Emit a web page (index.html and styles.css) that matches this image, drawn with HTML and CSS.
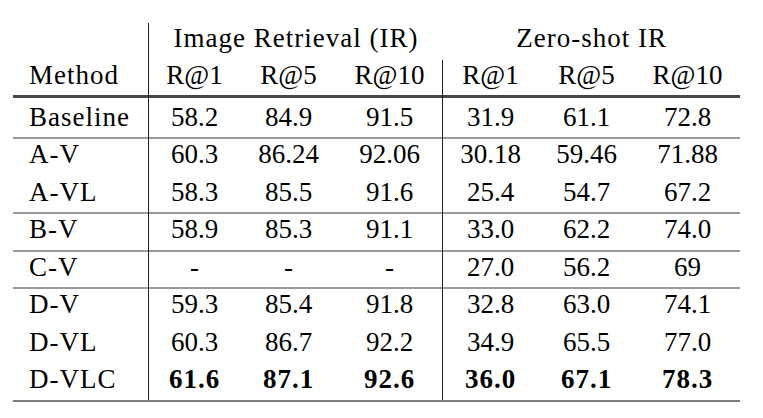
FILE: index.html
```html
<!DOCTYPE html>
<html lang="en">
<head>
<meta charset="utf-8">
<title>Retrieval results</title>
<link rel="stylesheet" href="styles.css">
</head>
<body>
<table class="results">
  <colgroup>
    <col class="w-method">
    <col class="w-a1">
    <col class="w-a5">
    <col class="w-a10">
    <col class="w-b1">
    <col class="w-b5">
    <col class="w-b10">
  </colgroup>
  <thead>
    <tr class="group">
      <th class="sep"></th>
      <th class="label" colspan="3">Image Retrieval (IR)</th>
      <th class="label" colspan="3">Zero-shot IR</th>
    </tr>
    <tr class="cols">
      <th class="label method sep">Method</th>
      <th>R@1</th>
      <th>R@5</th>
      <th class="sep">R@10</th>
      <th>R@1</th>
      <th>R@5</th>
      <th>R@10</th>
    </tr>
  </thead>
  <tbody>
    <tr class="first">
      <td class="label method sep">Baseline</td>
      <td>58.2</td><td>84.9</td><td class="sep">91.5</td>
      <td>31.9</td><td>61.1</td><td>72.8</td>
    </tr>
    <tr class="rule">
      <td class="label method sep">A-V</td>
      <td>60.3</td><td>86.24</td><td class="sep">92.06</td>
      <td>30.18</td><td>59.46</td><td>71.88</td>
    </tr>
    <tr>
      <td class="label method sep">A-VL</td>
      <td>58.3</td><td>85.5</td><td class="sep">91.6</td>
      <td>25.4</td><td>54.7</td><td>67.2</td>
    </tr>
    <tr class="rule">
      <td class="label method sep">B-V</td>
      <td>58.9</td><td>85.3</td><td class="sep">91.1</td>
      <td>33.0</td><td>62.2</td><td>74.0</td>
    </tr>
    <tr class="rule">
      <td class="label method sep">C-V</td>
      <td>-</td><td>-</td><td class="sep">-</td>
      <td>27.0</td><td>56.2</td><td>69</td>
    </tr>
    <tr class="rule">
      <td class="label method sep">D-V</td>
      <td>59.3</td><td>85.4</td><td class="sep">91.8</td>
      <td>32.8</td><td>63.0</td><td>74.1</td>
    </tr>
    <tr>
      <td class="label method sep">D-VL</td>
      <td>60.3</td><td>86.7</td><td class="sep">92.2</td>
      <td>34.9</td><td>65.5</td><td>77.0</td>
    </tr>
    <tr>
      <td class="label method sep">D-VLC</td>
      <td class="best">61.6</td><td class="best">87.1</td><td class="best sep">92.6</td>
      <td class="best">36.0</td><td class="best">67.1</td><td class="best">78.3</td>
    </tr>
  </tbody>
</table>
</body>
</html>
```

FILE: styles.css
```css
html, body {
  margin: 0;
  padding: 0;
  background: #ffffff;
}

body {
  padding: 23px 0 0 13px;
  font-family: "Liberation Serif", "LiberationSerif", "Tinos", "Noto Serif", "DejaVu Serif", "FreeSerif", "Nimbus Roman", "Nimbus Roman No9 L", "Times New Roman", Times, serif;
  font-size: 27px;
  color: #000000;
}

.results {
  width: 727px;
  table-layout: fixed;
  border-collapse: separate;
  border-spacing: 0;
  border-bottom: 2px solid #7a7a7a;
  font: inherit;
}

.w-method { width: 136px; }
.w-a1 { width: 91px; }
.w-a5 { width: 97px; }
.w-a10 { width: 106px; }
.w-b1 { width: 95px; }
.w-b5 { width: 97px; }
.w-b10 { width: 105px; }

.results th,
.results td {
  font-family: inherit;
  font-weight: normal;
  text-align: center;
  vertical-align: top;
  line-height: 30px;
  padding: 2px 0 0 0;
  white-space: nowrap;
}

.results .label {
  letter-spacing: 1px;
}

.results .method {
  text-align: left;
  padding-left: 16px;
}

.results .sep {
  border-right: 1px solid #1e1e1e;
}

.group {
  height: 37px;
}

.group th {
  padding-top: 0;
}

.cols {
  height: 38px;
}

.cols th {
  padding-top: 0;
  box-shadow: inset 0 -3px 0 #474747;
}

.results tbody tr {
  height: 37.5px;
}

.results tbody tr.first {
  height: 39px;
}

.results tbody tr.first td {
  padding-top: 3.5px;
}

.results tbody tr.rule td {
  box-shadow: inset 0 2px 0 #9a9a9a;
}

.results .best {
  font-weight: bold;
  letter-spacing: 1px;
}
```
